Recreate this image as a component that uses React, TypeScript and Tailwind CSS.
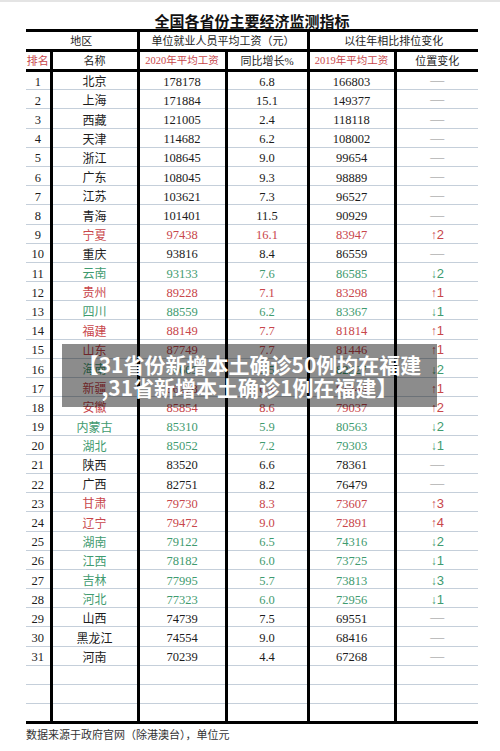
type Tone = "r" | "g" | "";
type Row = [number, string, string, string, string, string, Tone];

const rows: Row[] = [
  [1, "北京", "178178", "6.8", "166803", "", ""],
  [2, "上海", "171884", "15.1", "149377", "", ""],
  [3, "西藏", "121005", "2.4", "118118", "", ""],
  [4, "天津", "114682", "6.2", "108002", "", ""],
  [5, "浙江", "108645", "9.0", "99654", "", ""],
  [6, "广东", "108045", "9.3", "98889", "", ""],
  [7, "江苏", "103621", "7.3", "96527", "", ""],
  [8, "青海", "101401", "11.5", "90929", "", ""],
  [9, "宁夏", "97438", "16.1", "83947", "↑2", "r"],
  [10, "重庆", "93816", "8.4", "86559", "", ""],
  [11, "云南", "93133", "7.6", "86585", "↓2", "g"],
  [12, "贵州", "89228", "7.1", "83298", "↑1", "r"],
  [13, "四川", "88559", "6.2", "83367", "↓1", "g"],
  [14, "福建", "88149", "7.7", "81814", "↑1", "r"],
  [15, "山东", "87749", "7.7", "81446", "↑1", "r"],
  [16, "海南", "86609", "5.5", "82227", "↓2", "g"],
  [17, "新疆", "86278", "6.1", "81244", "↑1", "r"],
  [18, "安徽", "85854", "8.6", "79037", "↑2", "r"],
  [19, "内蒙古", "85310", "5.9", "80563", "↓2", "g"],
  [20, "湖北", "85052", "7.2", "79303", "↓1", "g"],
  [21, "陕西", "83520", "6.6", "78361", "", ""],
  [22, "广西", "82751", "8.2", "76479", "", ""],
  [23, "甘肃", "79730", "8.3", "73607", "↑3", "r"],
  [24, "辽宁", "79472", "9.0", "72891", "↑4", "r"],
  [25, "湖南", "79122", "6.5", "74316", "↓2", "g"],
  [26, "江西", "78182", "6.0", "73725", "↓1", "g"],
  [27, "吉林", "77995", "5.7", "73813", "↓3", "g"],
  [28, "河北", "77323", "6.0", "72956", "↓1", "g"],
  [29, "山西", "74739", "7.5", "69551", "", ""],
  [30, "黑龙江", "74554", "9.0", "68416", "", ""],
  [31, "河南", "70239", "4.4", "67268", "", ""],
];

const toneClass = (t: Tone) =>
  t === "r" ? "text-[#c8464b]" : t === "g" ? "text-[#3f9b70]" : "text-[#1c1c1c]";

const cell = "h-[19.2px] border-b border-b-[#c5cfda] p-0 pb-[1px] text-center align-bottom leading-none";
const vline = "border-l-[3px] border-l-black";
const head = "border-b-[3px] border-b-black p-0 pt-[2px] font-normal leading-none";

function Change({ value }: { value: string }) {
  if (!value) return <span className="text-[14px] leading-none text-[#8a8a8a]">—</span>;
  return (
    <span className="font-['Liberation_Sans',sans-serif] leading-none">
      <span className="text-[12px]">{value[0]}</span>
      <span className="text-[13px]">{value.slice(1)}</span>
    </span>
  );
}

export default function App() {
  return (
    <main className="relative h-[751px] w-[500px] overflow-hidden bg-white font-['Liberation_Serif','Noto_Sans_CJK_SC',serif] text-[#1c1c1c]">
      <div className="h-[2px] bg-[#e4e4e4]" />
      <div className="ml-[26px] w-[452px]">
        <h1 className="h-[27px] pt-[11px] text-center font-['Noto_Sans_CJK_SC',sans-serif] text-[15px] font-bold leading-[16px] text-[#111]">
          全国各省份主要经济监测指标
        </h1>
        <table className="w-[452px] table-fixed border-collapse text-[12.5px]">
          <colgroup>
            <col className="w-[25px]" />
            <col className="w-[87px]" />
            <col className="w-[88px]" />
            <col className="w-[82px]" />
            <col className="w-[87px]" />
            <col className="w-[83px]" />
          </colgroup>
          <thead className="text-[11px]">
            <tr className="h-[20px] border-t-[3px] border-t-black">
              <th colSpan={2} className={head}>
                地区
              </th>
              <th colSpan={2} className={`${vline} ${head}`}>
                单位就业人员平均工资（元）
              </th>
              <th colSpan={2} className={`${vline} ${head}`}>
                以往年相比排位变化
              </th>
            </tr>
            <tr className="h-[20px]">
              <th className={`${head} text-[#c8464b]`}>排名</th>
              <th className={`${vline} ${head}`}>名称</th>
              <th className={`${vline} ${head} text-[10.5px] text-[#c8464b]`}>2020年平均工资</th>
              <th className={`${vline} ${head}`}>同比增长%</th>
              <th className={`${vline} ${head} text-[10.5px] text-[#c8464b]`}>2019年平均工资</th>
              <th className={`${vline} ${head}`}>位置变化</th>
            </tr>
          </thead>
          <tbody>
            {rows.map(([rank, name, w20, growth, w19, change, tone]) => (
              <tr key={rank} className="h-[19.2px]">
                <td className={`${cell} text-[#1c1c1c]`}>{rank}</td>
                <td className={`${cell} ${vline} ${toneClass(tone)} text-[12px]`}>{name}</td>
                <td className={`${cell} ${vline} ${toneClass(tone)}`}>{w20}</td>
                <td className={`${cell} ${vline} ${toneClass(tone)}`}>{growth}</td>
                <td className={`${cell} ${vline} ${toneClass(tone)}`}>{w19}</td>
                <td className={`${cell} ${vline} ${toneClass(tone)}`}>
                  <Change value={change} />
                </td>
              </tr>
            ))}
            {[0, 1, 2].map((i) => (
              <tr key={`e${i}`} className="h-[19.2px]">
                {[0, 1, 2, 3, 4, 5].map((c) => (
                  <td
                    key={c}
                    className={`${i === 2 ? "border-b-[3px] border-b-black" : "border-b border-b-[#c5cfda]"} p-0 ${c > 0 ? vline : ""}`}
                  />
                ))}
              </tr>
            ))}
          </tbody>
        </table>
        <p className="mt-[3px] font-['Noto_Sans_CJK_SC',sans-serif] text-[11px] leading-[14px] text-[#333]">
          数据来源于政府官网（除港澳台），单位元
        </p>
      </div>

      <div className="absolute left-[62px] top-[344px] flex h-[63px] w-[375px] flex-col items-center justify-center bg-black/45 font-['Noto_Sans_CJK_SC',sans-serif] text-[21px] font-bold leading-[23px] text-white">
        <div>【31省份新增本土确诊50例均在福建</div>
        <div>,31省新增本土确诊1例在福建】</div>
      </div>
    </main>
  );
}
